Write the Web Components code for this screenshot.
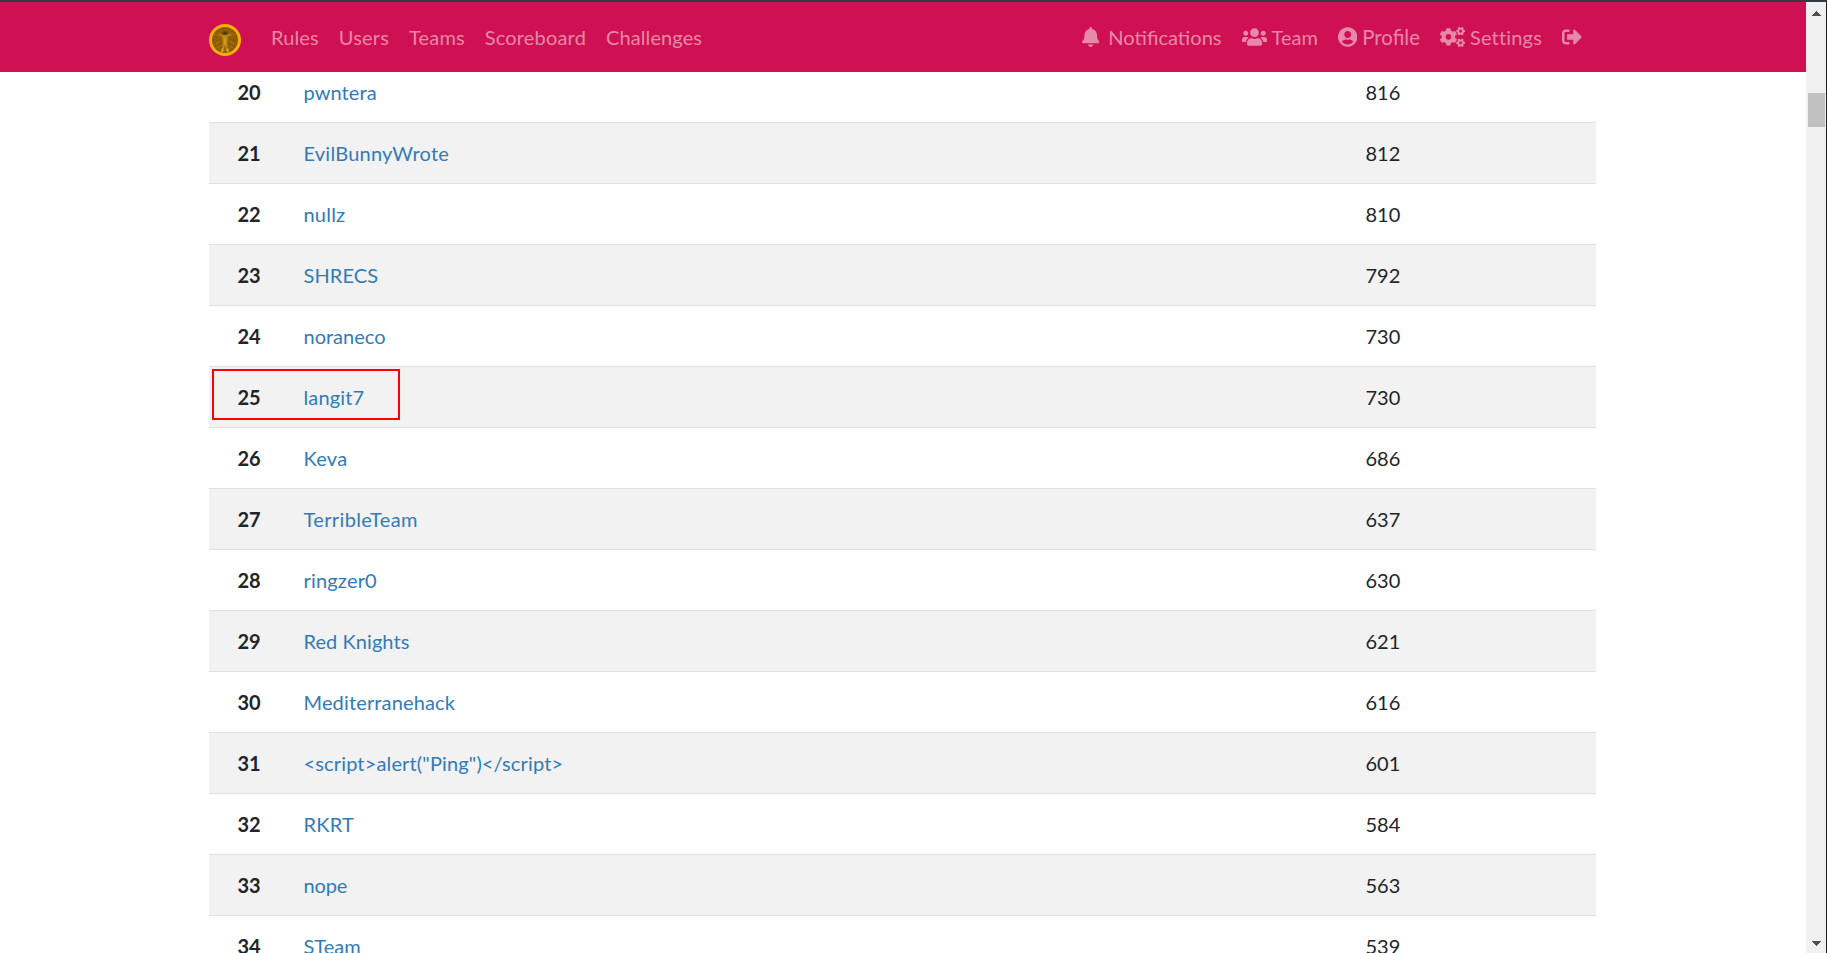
<!DOCTYPE html>
<html lang="en">
<head>
<meta charset="utf-8">
<title>Scoreboard</title>
<style>
html,body{margin:0;height:100%;overflow:hidden;background:#fff}
body{font:20px/30px Lato,sans-serif;color:#212529}
</style>
</head>
<body>
<score-app></score-app>
<script>
const define = (name, html, setup) => customElements.define(name, class extends HTMLElement {
  constructor() {
    super();
    this.attachShadow({mode: 'open'});
  }
  connectedCallback() {
    this.shadowRoot.innerHTML = html;
    if (setup) setup(this, this.shadowRoot);
  }
});

const SMALL_COG = 'M512.1 191l-8.2 14.3c-3 5.3-9.4 7.5-15.1 5.4-11.8-4.4-22.6-10.7-32.1-18.6-4.6-3.8-5.8-10.5-2.8-15.7l8.2-14.3c-6.9-8-12.3-17.3-15.9-27.4h-16.5c-6 0-11.2-4.3-12.2-10.3-2-12-2.1-24.6 0-37.1 1-6 6.2-10.4 12.2-10.4h16.5c3.6-10.1 9-19.4 15.9-27.4l-8.2-14.3c-3-5.2-1.9-11.9 2.8-15.7 9.5-7.9 20.4-14.2 32.1-18.6 5.7-2.1 12.1.1 15.1 5.4l8.2 14.3c10.5-1.9 21.2-1.9 31.7 0L552 6.3c3-5.3 9.4-7.5 15.1-5.4 11.8 4.4 22.6 10.7 32.1 18.6 4.6 3.8 5.8 10.5 2.8 15.7l-8.2 14.3c6.9 8 12.3 17.3 15.9 27.4h16.5c6 0 11.2 4.3 12.2 10.3 2 12 2.1 24.6 0 37.1-1 6-6.2 10.4-12.2 10.4h-16.5c-3.6 10.1-9 19.4-15.9 27.4l8.2 14.3c3 5.2 1.9 11.9-2.8 15.7-9.5 7.9-20.4 14.2-32.1 18.6-5.7 2.1-12.1-.1-15.1-5.4l-8.2-14.3c-10.4 1.9-21.2 1.9-31.7 0zm-10.5-58.8c38.5 29.6 82.4-14.3 52.8-52.8-38.5-29.7-82.4 14.3-52.8 52.8z';
const ICONS = {
  bell: [448, '<path d="M224 512c35.32 0 63.97-28.65 63.97-64H160.03c0 35.35 28.65 64 63.97 64zm215.39-149.71c-19.32-20.76-55.47-51.99-55.47-154.29 0-77.7-54.48-139.9-127.94-155.16V32c0-17.67-14.32-32-31.98-32s-31.98 14.33-31.98 32v20.84C118.56 68.1 64.08 130.3 64.08 208c0 102.3-36.15 133.53-55.47 154.29-6 6.45-8.66 14.16-8.61 21.71.11 16.4 12.98 32 32.1 32h383.8c19.12 0 32-15.6 32.1-32 .05-7.55-2.61-15.27-8.61-21.71z"/>'],
  users: [640, '<path d="M96 224c35.3 0 64-28.7 64-64s-28.7-64-64-64-64 28.7-64 64 28.7 64 64 64zm448 0c35.3 0 64-28.7 64-64s-28.7-64-64-64-64 28.7-64 64 28.7 64 64 64zm32 32h-64c-17.6 0-33.5 7.1-45.1 18.6 40.3 22.1 68.9 62 75.1 109.4h66c17.7 0 32-14.3 32-32v-32c0-35.3-28.7-64-64-64zm-256 0c61.9 0 112-50.1 112-112S381.9 32 320 32 208 82.1 208 144s50.1 112 112 112zm76.8 32h-8.3c-20.8 10-43.9 16-68.5 16s-47.6-6-68.5-16h-8.3C179.6 288 128 339.6 128 403.2V432c0 26.5 21.5 48 48 48h288c26.5 0 48-21.5 48-48v-28.8c0-63.6-51.6-115.2-115.2-115.2zm-223.7-13.4C161.5 263.1 145.6 256 128 256H64c-35.3 0-64 28.7-64 64v32c0 17.7 14.3 32 32 32h65.9c6.3-47.4 34.9-87.3 75.2-109.4z"/>'],
  user: [496, '<path d="M248 8C111 8 0 119 0 256s111 248 248 248 248-111 248-248S385 8 248 8zm0 96c48.6 0 88 39.4 88 88s-39.4 88-88 88-88-39.4-88-88 39.4-88 88-88zm0 344c-58.7 0-111.3-26.6-146.5-68.2 18.8-35.4 55.6-59.8 98.5-59.8 2.4 0 4.8.4 7.1 1.1 13 4.2 26.6 6.9 40.9 6.9 14.3 0 28-2.7 40.9-6.9 2.3-.7 4.7-1.1 7.1-1.1 42.9 0 79.7 24.4 98.5 59.8C359.3 421.4 306.7 448 248 448z"/>'],
  cogs: [640, `<path d="${SMALL_COG}"/><path transform="translate(0 300.5)" d="${SMALL_COG}"/><path d="M386.3 286.1l33.7 16.8c10.1 5.8 14.5 18.1 10.5 29.1-8.9 24.2-26.4 46.4-42.6 65.8-7.4 8.9-20.2 11.1-30.3 5.3l-29.1-16.8c-16 13.7-34.6 24.6-54.9 31.7v33.6c0 11.6-8.3 21.6-19.7 23.6-24.6 4.2-50.4 4.4-75.9 0-11.5-2-20-11.9-20-23.6V418c-20.3-7.2-38.9-18-54.9-31.7L74 403c-10 5.8-22.9 3.6-30.3-5.3-16.2-19.4-33.3-41.6-42.2-65.7-4-10.9.4-23.2 10.5-29.1l33.3-16.8c-3.9-20.9-3.9-42.4 0-63.4L12 205.8c-10.1-5.8-14.6-18.1-10.5-29 8.9-24.2 26-46.4 42.2-65.8 7.4-8.9 20.2-11.1 30.3-5.3l29.1 16.8c16-13.7 34.6-24.6 54.9-31.7V57.1c0-11.5 8.2-21.5 19.6-23.5 24.6-4.2 50.5-4.4 76-.1 11.5 2 20 11.9 20 23.6v33.6c20.3 7.2 38.9 18 54.9 31.7l29.1-16.8c10-5.8 22.9-3.6 30.3 5.3 16.2 19.4 33.2 41.6 42.1 65.8 4 10.9.1 23.2-10 29.1l-33.7 16.8c3.9 21 3.9 42.5 0 63.5zm-117.6 21.1c59.2-77-28.7-164.9-105.7-105.7-59.2 77 28.7 164.9 105.7 105.7z"/>`],
  out: [512, '<path d="M497 273L329 441c-15 15-41 4.5-41-17v-96H152c-13.3 0-24-10.7-24-24v-96c0-13.3 10.7-24 24-24h136V88c0-21.4 25.9-32 41-17l168 168c9.3 9.4 9.3 24.6 0 34zM192 436v-40c0-6.6-5.4-12-12-12H96c-17.7 0-32-14.3-32-32V160c0-17.7 14.3-32 32-32h84c6.6 0 12-5.4 12-12V76c0-6.6-5.4-12-12-12H96c-53 0-96 43-96 96v192c0 53 43 96 96 96h84c6.6 0 12-5.4 12-12z"/>']
};

define('nav-icon', '', (el, root) => {
  const [w, shape] = ICONS[el.getAttribute('name')];
  root.innerHTML = `<style>:host{display:block;height:20px}svg{display:block;fill:currentColor}</style>
    <svg width="${w / 25.6}" height="20" viewBox="0 0 ${w} 512">${shape}</svg>`;
});

define('nav-link', `<style>
  :host{display:flex;align-items:center;padding:0 10px;color:rgba(255,255,255,.5);white-space:nowrap}
  ::slotted(nav-icon){margin-right:var(--gap,5px)}
</style><slot name="icon"></slot><slot></slot>`);

define('brand-logo', `<style>:host{display:block;width:32px;height:32px}svg{display:block}</style>
<svg width="32" height="32" viewBox="0 0 32 32">
  <circle cx="16" cy="16" r="16" fill="#f5b000"/>
  <circle cx="16" cy="16" r="13" fill="#935e08"/>
  <g fill="none" stroke="#7d5006" stroke-width="1.2" stroke-dasharray="1.500 1.700">
    <circle cx="16" cy="16" r="11.500"/><circle cx="16" cy="16" r="8.500"/><circle cx="16" cy="16" r="5.500"/></g>
  <path d="M5 10l7 2M27 10l-7 2M7 20l4-3M25 20l-4-3M8 24l3-2M24 24l-3-2" stroke="#a87008" stroke-width="1.2"/>
  <path d="M13.500 11h5l3.500-2 .5 1-3.500 3-.8 5 1.300 10h-2.300L16 21l-1.200 7h-2.300l1.300-10-.8-5-3.500-3 .5-1z" fill="#b98410"/>
  <path d="M14.700 13h2.600v8h-2.600z" fill="#cf991a"/>
  <ellipse cx="16" cy="9" rx="2.300" ry="1.800" fill="#4c3d10"/>
  <path d="M12.700 28l1-3.500M19.300 28l-1-3.500" stroke="#d9a018" stroke-width="2"/>
</svg>`);

define('top-nav', `<style>
  :host{display:flex;box-sizing:border-box;height:72px;border-top:2px solid #343a40;background:#cf1052;padding:0 209px 0 209px;align-items:center;flex:none;position:relative;z-index:1}
  brand-logo{margin:6px 20px 0 0}
</style>
<style>.end{display:flex;margin-left:auto}</style>
<brand-logo></brand-logo>
<nav-link style="letter-spacing:.1px">Rules</nav-link><nav-link style="letter-spacing:.2px">Users</nav-link><nav-link style="letter-spacing:.15px">Teams</nav-link><nav-link style="letter-spacing:.17px">Scoreboard</nav-link><nav-link style="letter-spacing:.1px">Challenges</nav-link>
<div class="end">
  <nav-link style="--gap:9px;font-size:20.1px"><nav-icon slot="icon" name="bell"></nav-icon>Notifications</nav-link>
  <nav-link><nav-icon slot="icon" name="users"></nav-icon>Team</nav-link>
  <nav-link style="font-size:20.4px"><nav-icon slot="icon" name="user"></nav-icon>Profile</nav-link>
  <nav-link style="letter-spacing:.18px"><nav-icon slot="icon" name="cogs"></nav-icon>Settings</nav-link>
  <nav-link><nav-icon slot="icon" name="out"></nav-icon></nav-link>
</div>`);

define('score-row', `<style>
  :host{display:grid;grid-template-columns:80px 1061px 1fr;box-sizing:border-box;height:61px;border-top:1px solid #dee2e6;padding-top:15px;position:relative}
  :host([striped]){background:#f2f2f2}
  .rank{font-weight:700;text-align:center}
  .name{color:#337ab7;padding-left:14.500px;letter-spacing:var(--track,0)}
  .score{padding-left:15.500px}
  .mark{display:none;position:absolute;box-sizing:border-box;left:3px;top:2px;width:188px;height:51px;border:2px solid #f00}
  :host([marked]) .mark{display:block}
</style><div class="rank"></div><div class="name"><slot></slot></div><div class="score"></div><div class="mark"></div>`, (el, root) => {
  root.querySelector('.rank').textContent = el.getAttribute('rank');
  root.querySelector('.score').textContent = el.getAttribute('score');
});

define('score-table', '<style>:host{display:block;margin:-11px 210px 0 209px}</style>', (el, root) => {
  // name, score, letter-spacing in px
  const teams = [['pwntera', 816, .1], ['EvilBunnyWrote', 812, .23], ['nullz', 810, .2], ['SHRECS', 792, .1], ['noraneco', 730, 0], ['langit7', 730, .15], ['Keva', 686, .25], ['TerribleTeam', 637, .38], ['ringzer0', 630, .18], ['Red Knights', 621, .06], ['Mediterranehack', 616, .15], ['<script>alert("Ping")<\/script>', 601, .15], ['RKRT', 584, .25], ['nope', 563, -.15], ['STeam', 539, 0]];
  teams.forEach(([name, score, track], i) => {
    const row = document.createElement('score-row');
    row.setAttribute('rank', 20 + i);
    row.setAttribute('score', score);
    row.toggleAttribute('striped', i % 2 === 1);
    row.toggleAttribute('marked', name === 'langit7');
    row.style.setProperty('--track', track + 'px');
    row.textContent = name;
    root.append(row);
  });
});

define('scroll-bar', `<style>
  :host{display:flex;flex-direction:column;box-sizing:border-box;width:21px;height:100%;border-right:1px solid #202124;border-top:2px solid #343a40;background:#f0f0f0;padding:9px 1px 7px 2px}
  svg{display:block;margin-left:4px;fill:#505050}
  .thumb{width:17px;height:34px;background:#c1c1c1;margin:77px 0 auto}
</style>
<svg width="9" height="5" shape-rendering="crispEdges"><path d="M4 0h1v1h1v1h1v1h1v1h1v1H0V4h1V3h1V2h1V1h1z"/></svg>
<div class="thumb"></div>
<svg width="9" height="5" shape-rendering="crispEdges"><path d="M4 5h1V4h1V3h1V2h1V1h1V0H0v1h1v1h1v1h1v1h1z"/></svg>`);

define('score-app', `<style>
  :host{display:grid;grid-template-columns:1fr 21px;height:100vh;overflow:hidden}
  main{height:100vh;overflow:hidden;min-width:0}
</style><main><top-nav></top-nav><score-table></score-table></main><scroll-bar></scroll-bar>`);
</script>
</body>
</html>
